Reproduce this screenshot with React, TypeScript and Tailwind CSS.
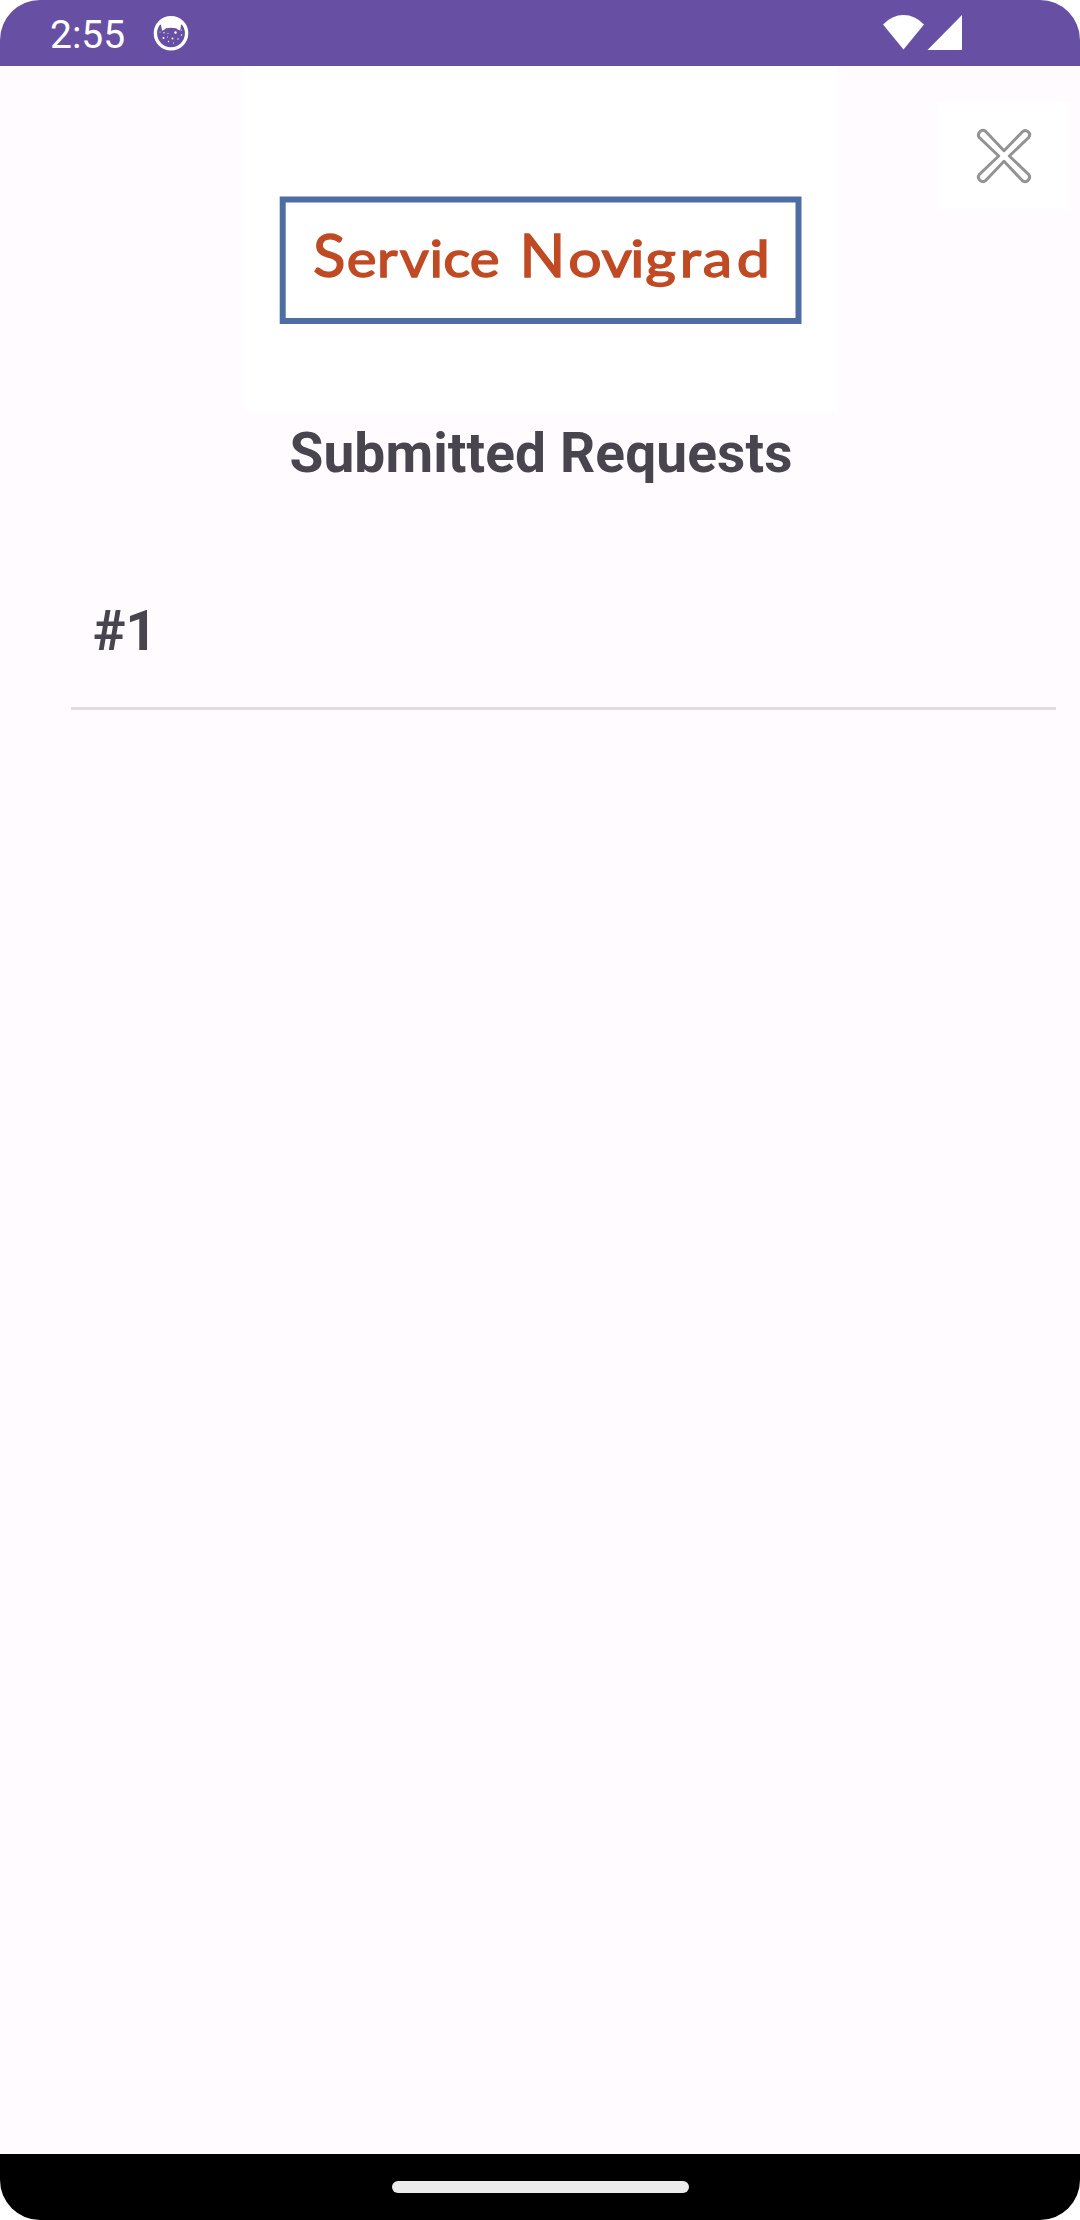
import React from "react";

function AndroidHeadIcon() {
  return (
    <svg className="h-9 w-9" viewBox="0 0 36 36">
      <circle cx="18" cy="18.300" r="15.6" fill="none" stroke="#fff" strokeWidth="3.4" />
      <path
        d="M6.5 8.5Q11 2.5 18 2.5T29.500 8.500L28 10L27.200 15.500Q24.500 14.800 23 13.300Q18 12.300 13 13.300Q11.500 14.800 9 15.800L8 10Z"
        fill="#fff"
      />
      <g fill="#fff">
        <circle cx="10.500" cy="23" r="1" />
        <circle cx="11" cy="17.800" r="0.700" />
        <circle cx="15" cy="18.500" r="0.500" />
        <circle cx="22.500" cy="17.500" r="1.200" />
        <circle cx="7" cy="17" r="0.500" />
        <circle cx="19.500" cy="23.600" r="1" />
        <circle cx="15.500" cy="26.500" r="0.700" />
        <circle cx="25" cy="24" r="0.700" />
        <circle cx="28.500" cy="20" r="0.700" />
        <circle cx="28.500" cy="15" r="0.500" />
        <circle cx="14.500" cy="22" r="0.500" />
        <circle cx="20.500" cy="28" r="0.600" />
      </g>
    </svg>
  );
}

function StatusBar() {
  return (
    <header className="flex h-[66px] shrink-0 items-center bg-[#6750a3] text-white">
      <span className="ml-[50px] w-[103px] pt-[4px] text-[39px] leading-[62px]">2:55</span>
      <AndroidHeadIcon />
      <svg className="ml-[694px] h-9 w-[80px]" viewBox="0 0 80 36" fill="#fff">
        <path d="M0 9.500Q9 0 20.500 0T41 9.500L20.500 34.500Z" />
        <path d="M79 0V35H44.500Z" />
      </svg>
    </header>
  );
}

function Logo() {
  return (
    <svg
      className="h-[347px] w-[594px] bg-white"
      viewBox="243 66 594 347"
      fill="#bf4a23"
      stroke="#bf4a23"
    >
      <rect x="282.700" y="199.500" width="515.800" height="121.500" fill="none" stroke="#4d6da3" strokeWidth="6" />
      <g fontFamily="Lato, sans-serif" strokeWidth="1.400">
        <text y="277.300" fontSize="60" x="313">S</text>
        <text
          y="277.300"
          fontSize="50"
          transform="scale(1.13 1)"
          x="306.800 333.600 353.700 380 392.200 415.700"
        >
          ervice
        </text>
        <text y="277.300" fontSize="60" x="519.500">N</text>
        <text
          y="277.300"
          fontSize="50"
          transform="scale(1.18 1)"
          x="481.500 509.800 534.100 546.800 576 595.500 624.300"
        >
          ovigrad
        </text>
      </g>
    </svg>
  );
}

function CloseButton() {
  return (
    <button
      aria-label="Close"
      className="ml-[101px] mt-[35px] flex h-[109px] w-[132px] items-center justify-center rounded-[5px] bg-white"
    >
      <svg className="h-[60px] w-[60px]" viewBox="-30 -30 60 60">
        <path
          d="M0-5.300L18.500-24.200Q21-26.800 24-24.300T24.700-18.500L5.300 0L24.700 18.500Q26.800 21 24.300 24T18.500 24.700L0 5.300L-18.500 24.700Q-21 26.800-24 24.300T-24.700 18.500L-5.300 0L-24.700-18.500Q-26.800-21-24.300-24T-18.500-24.700Z"
          fill="#fff"
          stroke="#939393"
          strokeWidth="3"
          strokeLinejoin="round"
        />
      </svg>
    </button>
  );
}

const requests = ["#1"];

export default function App() {
  return (
    <div className="h-[2220px] w-[1080px] bg-white">
      <div className="flex h-full flex-col overflow-hidden rounded-[40px] bg-[#fffbff] font-[Roboto,sans-serif] text-[#49454f]">
        <StatusBar />
        <main className="flex flex-1 flex-col">
          <div className="ml-[243px] flex items-start">
            <Logo />
            <CloseButton />
          </div>
          <h1 className="mt-2 pl-[2px] text-center text-[55px] font-bold leading-[64px] tracking-[0.12px]">
            Submitted Requests
          </h1>
          <ul className="ml-[71px] mr-6 mt-[71px]">
            {requests.map((request) => (
              <li
                key={request}
                className="flex h-[154px] items-end border-b-[3px] border-[#e0dce0] pb-[44px] pl-[22px] text-[55px] font-bold leading-[64px]"
              >
                {request}
              </li>
            ))}
          </ul>
        </main>
        <footer className="flex h-[66px] shrink-0 items-center justify-center bg-black">
          <div className="h-3 w-[297px] rounded-full bg-[#ebebeb]" />
        </footer>
      </div>
    </div>
  );
}
